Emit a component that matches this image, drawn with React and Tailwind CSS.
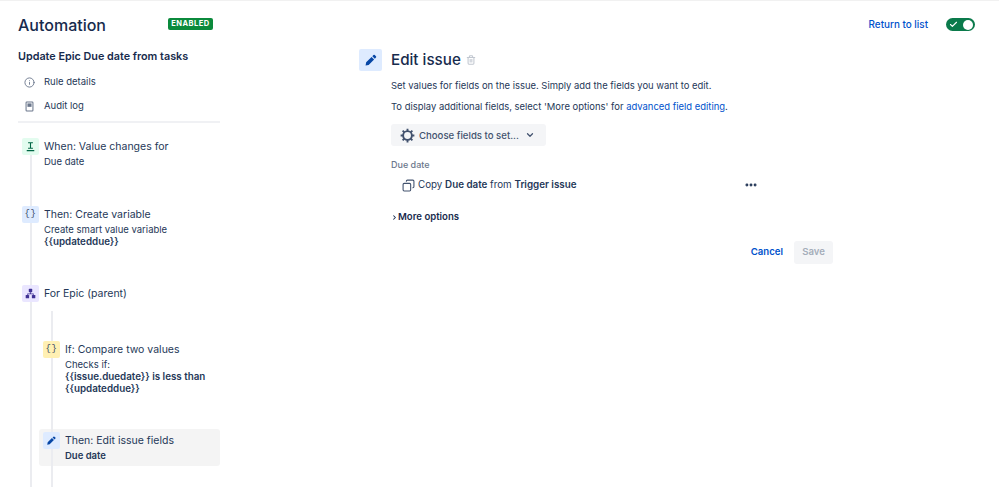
import { Info, ChevronDown, ChevronRight, Check, Trash2, Copy, MoreHorizontal } from "lucide-react";

const Pencil = ({ className }) => (
  <svg viewBox="0 0 24 24" className={className} fill="#0747a6">
    <path d="M16.2 3.6a1.6 1.6 0 0 1 2.3 0l2 2a1.6 1.6 0 0 1 0 2.3L18.6 9.8l-4.3-4.3zM13 6.8l4.3 4.3L8 20.4l-5.3 1 1-5.4z" />
  </svg>
);

const Braces = () => (
  <span className="text-[9px] leading-none tracking-[0.5px] text-[#344563] [font-family:'Liberation_Mono',monospace]">{"{}"}</span>
);

const ValueIcon = () => (
  <svg viewBox="0 0 16 16" className="h-[11px] w-[11px]" fill="none" stroke="#006644" strokeWidth="1.6">
    <path d="M4.5 2.5h7M4.5 10.5h7M8 3v7M2.5 14h11" />
  </svg>
);

const TreeIcon = () => (
  <svg viewBox="0 0 16 16" className="h-[11px] w-[11px]" fill="#403294">
    <rect x="5.5" y="1" width="5" height="5" rx="1" />
    <rect x="1" y="10" width="5" height="5" rx="1" />
    <rect x="10" y="10" width="5" height="5" rx="1" />
    <path d="M7.4 6h1.2v2h4v2h-1.2V9.2H4.6V10H3.4V8h4z" />
  </svg>
);

const Gear = () => (
  <svg viewBox="0 0 24 24" className="h-[15px] w-[15px] shrink-0" fill="none" stroke="#42526e" strokeWidth="3">
    <circle cx="12" cy="12" r="7" />
    <path d="M12 1v4M12 19v4M1 12h4M19 12h4M4.2 4.2l2.8 2.8M17 17l2.8 2.8M4.2 19.8L7 17M17 7l2.8-2.8" />
  </svg>
);

const AuditIcon = () => (
  <svg viewBox="0 0 16 16" className="h-[11px] w-[11px]" fill="none" stroke="#6b778c" strokeWidth="1.5">
    <rect x="3" y="1.5" width="10" height="13" rx="1" />
    <rect x="5" y="3.5" width="6" height="5" fill="#6b778c" stroke="none" />
  </svg>
);

const Step = ({ icon, box, title, height, children }) => (
  <div className="flex" style={{ height }}>
    <div className="flex w-[17px] shrink-0 flex-col items-center">
      <div className={`flex h-[17px] w-[17px] shrink-0 items-center justify-center rounded-[2px] ${box}`}>{icon}</div>
      <div className="w-[2px] flex-1 bg-[#ebecf0]" />
    </div>
    <div className="pl-[5px] pt-[2px]">
      <p className="text-[10.5px] leading-[14px] text-[#253858]">{title}</p>
      <div className="mt-[2px] text-[9.5px] leading-[12px] text-[#253858]">{children}</div>
    </div>
  </div>
);

export default function App() {
  return (
    <div className="h-[487px] w-[999px] overflow-hidden border-t border-[#f1f1f1] bg-white text-[#172b4d] [font-family:Inter,sans-serif]">
      {/* Header */}
      <div className="flex h-[48px] items-start pl-[18px] pr-[24px]">
        <h1 className="mt-[13px] w-[150px] text-[16px] font-medium leading-[22px] text-[#172b4d]">Automation</h1>
        <span className="mt-[17px] flex h-[12px] w-[45px] items-center justify-center rounded-[2px] bg-[#0b8a3c] text-[7.5px] font-bold tracking-[0.5px] text-white">
          ENABLED
        </span>
        <a className="ml-auto mt-[16px] text-[9.9px] font-medium leading-[14px] text-[#0052cc]">Return to list</a>
        <div className="ml-[18px] mt-[17px] flex h-[13px] w-[29px] items-center justify-between rounded-full bg-[#0b7a4b] px-[2px]">
          <Check className="ml-[1px] h-[9px] w-[9px] text-white" strokeWidth={3} />
          <span className="h-[10px] w-[10px] rounded-full bg-white" />
        </div>
      </div>

      <div className="flex">
        {/* Sidebar */}
        <aside className="ml-[18px] w-[202px] shrink-0">
          <h2 className="mt-[1px] text-[10.8px] font-semibold leading-[14px] text-[#172b4d]">Update Epic Due date from tasks</h2>
          <ul className="mt-[11px] flex flex-col gap-[10px] border-b-2 border-[#f0f1f4] pb-[8px] text-[9.5px] leading-[14px] text-[#253858]">
            <li className="flex items-center gap-[9px] pl-[6px]">
              <Info className="h-[11px] w-[11px] text-[#6b778c]" strokeWidth={2} />
              Rule details
            </li>
            <li className="flex items-center gap-[9px] pl-[6px]">
              <AuditIcon />
              Audit log
            </li>
          </ul>

          <div className="ml-[4px] mt-[15px]">
            <Step height={68} icon={<ValueIcon />} box="bg-[#e3fcef]" title="When: Value changes for">
              Due date
            </Step>
            <Step height={79} icon={<Braces />} box="bg-[#deebff]" title="Then: Create variable">
              Create smart value variable
              <br />
              <b className="text-[9.8px] font-semibold">{"{{updateddue}}"}</b>
            </Step>
            <Step height={26} icon={<TreeIcon />} box="bg-[#eae6ff]" title="For Epic (parent)" />

            {/* Nested steps */}
            <div className="flex">
              <div className="flex w-[17px] shrink-0 justify-center">
                <div className="w-[2px] bg-[#ebecf0]" />
              </div>
              <div className="ml-[4px] flex-1">
                <div className="ml-[7.5px] h-[30px] w-[2px] bg-[#ebecf0]" />
                <Step height={91} icon={<Braces />} box="bg-[#fff0b3]" title="If: Compare two values">
                  Checks if:
                  <br />
                  <b className="text-[9.8px] font-semibold">
                    {"{{issue.duedate}} is less than"}
                    <br />
                    {"{{updateddue}}"}
                  </b>
                </Step>
                <div className="-ml-[4px] -mt-[3px] flex h-[37px] rounded-[3px] bg-[#f4f4f4] pl-[4px] pt-[3px]">
                  <Step height={34} icon={<Pencil className="h-[11px] w-[11px]" />} box="bg-[#deebff]" title="Then: Edit issue fields">
                    <b className="font-semibold">Due date</b>
                  </Step>
                </div>
                <div className="ml-[7.5px] h-[30px] w-[2px] bg-[#ebecf0]" />
              </div>
            </div>
          </div>
        </aside>

        {/* Editor */}
        <main className="ml-[139px] flex w-[474px] shrink-0 items-start gap-[9px]">
          <div className="flex h-[22px] w-[23px] shrink-0 items-center justify-center rounded-[2px] bg-[#deebff]">
            <Pencil className="h-[14px] w-[14px]" />
          </div>
          <div className="flex-1">
            <div className="flex h-[22px] items-center gap-[5px]">
              <h2 className="text-[15.2px] font-medium leading-[22px] text-[#172b4d]">Edit issue</h2>
              <Trash2 className="h-[10px] w-[10px] text-[#c1c7d0]" strokeWidth={2.5} />
            </div>
            <p className="mt-[8px] text-[9.45px] leading-[14px] text-[#253858]">Set values for fields on the issue. Simply add the fields you want to edit.</p>
            <p className="mt-[7px] text-[9.45px] leading-[14px] text-[#253858]">
              To display additional fields, select 'More options' for <a className="text-[#0052cc]">advanced field editing</a>.
            </p>
            <button className="mt-[10px] flex h-[22px] w-[155px] items-center rounded-[3px] bg-[#f4f5f7] pl-[9px] text-[9.6px] font-medium leading-[14px] text-[#42526e]">
              <Gear />
              <span className="ml-[4px] pt-[1px]">Choose fields to set...</span>
              <ChevronDown className="ml-[6px] h-[10px] w-[10px]" strokeWidth={3} />
            </button>
            <p className="mt-[13px] text-[9px] font-medium leading-[12px] text-[#6b778c]">Due date</p>
            <div className="mt-[6px] flex h-[16px] items-center pl-[11px] text-[9.8px] text-[#253858]">
              <Copy className="h-[13px] w-[13px] -scale-x-100 text-[#42526e]" strokeWidth={2} />
              <span className="ml-[3px] w-[326px]">
                Copy <b className="font-semibold">Due date</b> from <b className="font-semibold">Trigger issue</b>
              </span>
              <MoreHorizontal className="h-[14px] w-[14px] text-[#253858]" strokeWidth={3} />
            </div>
            <div className="mt-[17px] flex items-center text-[9.6px] font-semibold leading-[14px] text-[#172b4d]">
              <ChevronRight className="h-[7px] w-[7px]" strokeWidth={3.5} />
              <span>More options</span>
            </div>
            <div className="mt-[17px] flex w-[442px] items-center justify-end gap-[11px] text-[9.6px] font-semibold">
              <span className="text-[#0052cc]">Cancel</span>
              <button className="h-[23px] w-[39px] rounded-[3px] bg-[#f4f5f7] font-semibold text-[#a5adba]">Save</button>
            </div>
          </div>
        </main>
      </div>
    </div>
  );
}
